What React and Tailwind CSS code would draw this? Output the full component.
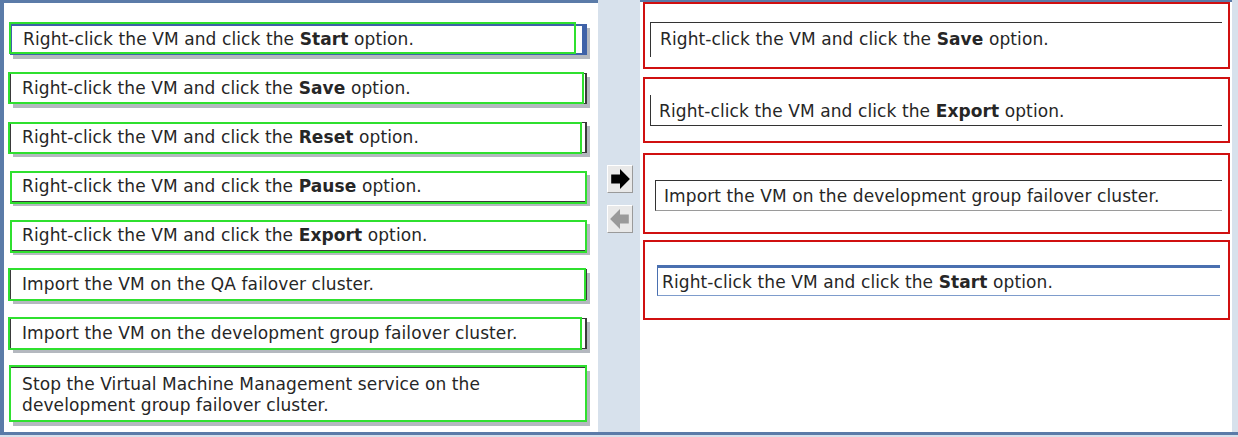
import React from "react";

const leftItems = [
  { pre: "Right-click the VM and click the ", bold: "Start", post: " option.", ring: "-left-[1px] -top-[2px] w-[567px] h-[32px]", selected: true },
  { pre: "Right-click the VM and click the ", bold: "Save", post: " option.", ring: "-left-[2px] -top-[1px] w-[576px] h-[32px]" },
  { pre: "Right-click the VM and click the ", bold: "Reset", post: " option.", ring: "-left-[2px] top-0 w-[574px] h-[32px]" },
  { pre: "Right-click the VM and click the ", bold: "Pause", post: " option.", ring: "left-0 top-0 w-[577px] h-[33px]" },
  { pre: "Right-click the VM and click the ", bold: "Export", post: " option.", ring: "left-0 top-0 w-[577px] h-[33px]" },
  { pre: "Import the VM on the QA failover cluster.", ring: "-left-[2px] -top-[1px] w-[578px] h-[33px]" },
  { pre: "Import the VM on the development group failover cluster.", ring: "-left-[2px] -top-[1px] w-[574px] h-[33px]" },
  { pre: "Stop the Virtual Machine Management service on the development group failover cluster.", ring: "-left-[1px] -top-[2px] w-[578px] h-[57px]", tall: true },
];

const Label = ({ pre, bold, post }) => (
  <span>
    {pre}
    {bold && <b className="font-bold">{bold}</b>}
    {post}
  </span>
);

const LeftItem = ({ item }) => (
  <div className="relative">
    <div
      className={
        "bg-white w-[577px] flex items-center px-[11px] leading-[21px] shadow-[3px_4px_0_#b4b8bf] " +
        (item.tall ? "h-[55px] " : "h-[31px] ") +
        (item.selected ? "border-2 border-r-[5px] border-[#3f62a8]" : "border border-r-2 border-[#3a3a3a]")
      }
    >
      <Label {...item} />
    </div>
    <div className={"absolute border-2 border-[#2fe02f] pointer-events-none " + item.ring}></div>
  </div>
);

const ArrowButton = ({ dir, active }) => (
  <div className="w-[26px] h-[28px] bg-[#e9e9e9] border border-t-white border-l-white border-b-[#9a9a9a] border-r-[#9a9a9a] flex items-center justify-center">
    <svg width="22" height="22" viewBox="0 0 20 20">
      {dir === "right" ? (
        <polygon points="2,6 10,6 10,1 19,10 10,19 10,14 2,14" fill={active ? "#000" : "#9a9a9a"} />
      ) : (
        <polygon points="18,6 10,6 10,1 1,10 10,19 10,14 18,14" fill={active ? "#000" : "#9a9a9a"} />
      )}
    </svg>
  </div>
);

export default function App() {
  return (
    <div
      className="w-[1238px] h-[437px] bg-[#d7e1ec] flex flex-col text-[17px] tracking-[0.1px] text-[#262626] overflow-hidden"
      style={{ fontFamily: '"DejaVu Sans", Verdana, sans-serif' }}
    >
      <div className="flex h-[432px]">
        {/* source list */}
        <div className="w-[598px] bg-white border-l-4 border-t-[3px] border-[#5b7ba8] pl-[6px] pt-[21px] flex flex-col gap-[18px]">
          {leftItems.map((item, i) => (
            <LeftItem key={i} item={item} />
          ))}
        </div>

        {/* move buttons */}
        <div className="w-[42px] flex flex-col pl-[9px] pt-[165px] gap-[12px]">
          <ArrowButton dir="right" active />
          <ArrowButton dir="left" />
        </div>

        {/* answer area */}
        <div className="w-[592px] bg-white border-t-2 border-[#5b7ba8] pl-[3px] flex flex-col">
          <div className="w-[587px] h-[67px] border-2 border-[#d01010] pt-[18px] pl-[5px]">
            <div className="w-[572px] h-[35px] border-t border-l border-[#333] flex items-center pl-[9px]">
              <Label pre="Right-click the VM and click the " bold="Save" post=" option." />
            </div>
          </div>
          <div className="w-[587px] h-[66px] mt-[8px] border-2 border-[#d01010] pt-[16px] pl-[5px]">
            <div className="w-[572px] h-[31px] border-b border-l border-[#333] flex items-center pl-[8px] pt-[4px]">
              <Label pre="Right-click the VM and click the " bold="Export" post=" option." />
            </div>
          </div>
          <div className="w-[587px] h-[81px] mt-[10px] border-2 border-[#d01010] pt-[25px] pl-[10px]">
            <div className="w-[567px] h-[31px] border-t border-l border-[#333] border-b border-b-[#9a9a9a] flex items-center pl-[8px] pt-[3px]">
              <Label pre="Import the VM on the development group failover cluster." />
            </div>
          </div>
          <div className="w-[587px] h-[80px] mt-[6px] border-2 border-[#d01010] pt-[23px] pl-[12px]">
            <div className="w-[563px] h-[31px] border-t-[3px] border-l border-[#4a70b0] border-b border-b-[#7e9ccc] flex items-center pl-[4px] pt-[3px]">
              <Label pre="Right-click the VM and click the " bold="Start" post=" option." />
            </div>
          </div>
        </div>
        <div className="flex-1"></div>
      </div>
      <div className="h-[3px] bg-[#5b7ba8]"></div>
    </div>
  );
}
